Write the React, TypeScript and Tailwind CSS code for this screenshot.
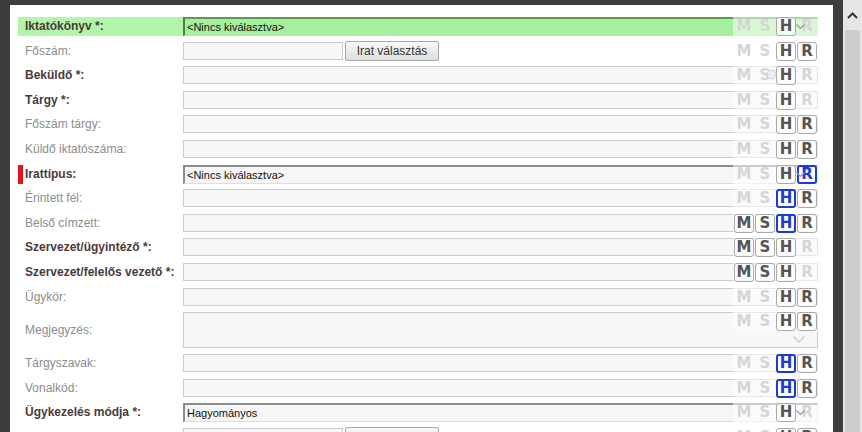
import React from "react";

type S = "l" | "d" | "b";

type Row = {
  label: string;
  req?: boolean;
  kind?: "text" | "select" | "split" | "area";
  value?: string;
  flags: S[];
  green?: boolean;
  marker?: boolean;
  lookup?: boolean;
};

const rows: Row[] = [
  { label: "Iktatókönyv *:", req: true, kind: "select", value: "<Nincs kiválasztva>", flags: ["l", "l", "d", "l"], green: true },
  { label: "Főszám:", kind: "split", flags: ["l", "l", "d", "d"] },
  { label: "Beküldő *:", req: true, flags: ["l", "l", "d", "l"], lookup: true },
  { label: "Tárgy *:", req: true, flags: ["l", "l", "d", "l"] },
  { label: "Főszám tárgy:", flags: ["l", "l", "d", "d"] },
  { label: "Küldő iktatószáma:", flags: ["l", "l", "d", "d"] },
  { label: "Irattípus:", req: true, kind: "select", value: "<Nincs kiválasztva>", flags: ["l", "l", "d", "b"], marker: true },
  { label: "Érintett fél:", flags: ["l", "l", "b", "d"] },
  { label: "Belső címzett:", flags: ["d", "d", "b", "d"] },
  { label: "Szervezet/ügyintéző *:", req: true, flags: ["d", "d", "d", "l"] },
  { label: "Szervezet/felelős vezető *:", req: true, flags: ["d", "d", "d", "l"] },
  { label: "Ügykör:", flags: ["l", "l", "d", "d"] },
  { label: "Megjegyzés:", kind: "area", flags: ["l", "l", "d", "d"] },
  { label: "Tárgyszavak:", flags: ["l", "l", "b", "d"] },
  { label: "Vonalkód:", flags: ["l", "l", "b", "d"] },
  { label: "Ügykezelés módja *:", req: true, kind: "select", value: "Hagyományos", flags: ["l", "l", "d", "l"] },
  { label: "Előzmény:", kind: "split", flags: ["l", "l", "d", "d"] },
];

function Flag({ ch, s }: { ch: string; s: S }) {
  if (s === "b")
    return (
      <div className="w-[20px] h-[19px] flex items-center justify-center rounded-[3px] border-2 border-[#1a3bd8] bg-white/80 text-[#1b3bd4]">
        {ch}
      </div>
    );
  if (s === "d")
    return (
      <div className="w-[20px] h-[19px] flex items-center justify-center rounded-[3px] border border-[#a9a9a9] bg-white/70 text-[#555555]">
        {ch}
      </div>
    );
  return <div className="w-[20px] h-[19px] flex items-center justify-center text-[#d6d6d6]">{ch}</div>;
}

function Chevron({ className }: { className: string }) {
  return (
    <svg className={className} width="9" height="6" viewBox="0 0 9 6">
      <polyline points="0.5,0.5 4.5,4.5 8.5,0.5" fill="none" stroke="#9a9a9a" strokeWidth="1.2" />
    </svg>
  );
}

function FormRow({ r }: { r: Row }) {
  const area = r.kind === "area";
  const labelCls = r.req ? "font-bold text-[#4b3a3a]" : "text-[#8c8c8c]";
  const inner = (
    <>
      <div className={`w-[165px] shrink-0 flex items-center ${area ? "h-[36px]" : "h-[19px]"} ${r.marker ? "" : "pl-[7px]"}`}>
        {r.marker && <div className="w-[5px] h-[19px] bg-[#e8121a] mr-[2px]" />}
        <span className={`text-[12px] leading-[19px] whitespace-nowrap ${labelCls}`}>{r.label}</span>
      </div>
      <div className={`relative w-[635px] ${area ? "h-[36px]" : "h-[19px]"}`}>
        {r.kind === "split" ? (
          <div className="flex gap-[2px] items-center h-[19px]">
            <div className="w-[160px] h-[18px] border border-[#cccccc] bg-[#f7f7f7]" />
            <button className="w-[94px] h-[20px] border border-[#a8a8a8] rounded-[2px] bg-gradient-to-b from-[#fafafa] to-[#dedede] text-[12px] text-[#333333] leading-none">
              Irat választás
            </button>
          </div>
        ) : r.kind === "select" ? (
          <div
            className={`h-[19px] w-full border-t-2 border-l-2 border-r border-b pl-[2px] text-[11px] leading-[16px] text-[#111111] ${
              r.green ? "border-t-[#5c9a52] border-l-[#4c7f43] border-r-[#a6ef9e] border-b-[#a6ef9e] bg-[#a6ef9e]" : "border-t-[#8c8c8c] border-l-[#8c8c8c] border-r-[#dddddd] border-b-[#dddddd] bg-[#f6f6f6]"
            }`}
          >
            {r.value}
          </div>
        ) : (
          <div className={`w-full border border-[#cccccc] bg-[#f7f7f7] ${area ? "h-[36px]" : "h-[18px]"}`} />
        )}
        <div className="absolute right-0 top-0 w-[85px] h-[19px] bg-white/55 flex justify-end gap-[1px] pr-[1px] font-['DejaVu_Sans',Verdana,sans-serif] font-bold text-[15px] leading-none">
          {["M", "S", "H", "R"].map((c, i) => (
            <Flag key={c} ch={c} s={r.flags[i]} />
          ))}
        </div>
        {r.kind === "select" && <Chevron className="absolute right-[13px] top-[7px]" />}
        {area && (
          <svg className="absolute right-[13px] top-[24px]" width="12" height="7" viewBox="0 0 12 7">
            <polyline points="0.5,0.5 6,6 11.5,0.5" fill="none" stroke="#cfcfcf" strokeWidth="1.5" />
          </svg>
        )}
        {r.lookup && (
          <svg className="absolute right-[41px] top-[3px]" width="11" height="11" viewBox="0 0 11 11">
            <circle cx="5.5" cy="5.5" r="4.5" fill="#e6eef2" stroke="#c4d4dc" strokeWidth="1" />
          </svg>
        )}
      </div>
    </>
  );
  return (
    <div className={`flex items-start ${area ? "h-[42px]" : "h-[24.6px]"}`}>
      {r.green ? <div className="flex items-start h-[19px] bg-[#b4f5ac]">{inner}</div> : inner}
    </div>
  );
}

export default function App() {
  return (
    <div className="w-[862px] h-[432px] overflow-hidden flex font-['Liberation_Sans',Arial,sans-serif]">
      <div className="w-[843px] h-full bg-[#3d3d3d] pl-[10px] pr-[10px] pt-[5px]">
        <div className="h-full bg-white pl-[8px] pt-[12px]">
          {rows.map((r) => (
            <FormRow key={r.label} r={r} />
          ))}
        </div>
      </div>
      <div className="w-[19px] h-full bg-[#e6e6e6] flex flex-col">
        <div className="h-[30px] flex items-center justify-center">
          <svg width="11" height="7" viewBox="0 0 11 7">
            <polyline points="1,6 5.5,1.5 10,6" fill="none" stroke="#333333" strokeWidth="2" />
          </svg>
        </div>
        <div className="flex-1 mx-[2px] bg-[#cdcdcd]" />
      </div>
    </div>
  );
}
